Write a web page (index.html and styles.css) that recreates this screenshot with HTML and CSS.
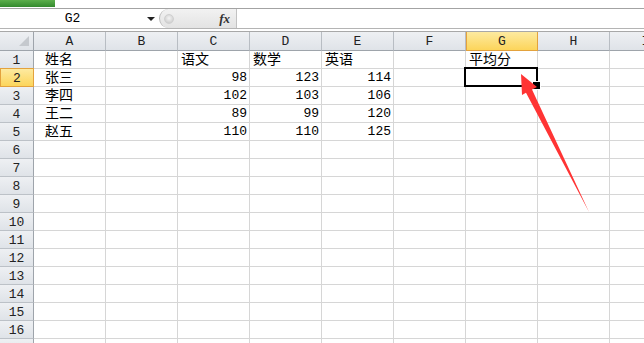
FILE: index.html
```html
<!DOCTYPE html>
<html lang="zh-CN">
<head>
    <meta charset="UTF-8">
    <meta name="viewport" content="width=device-width, initial-scale=1.0">
    <title>Book1 - Excel</title>
    <link rel="stylesheet" href="styles.css">
</head>
<body>
    <div class="ribbon">
        <div class="file-tab"></div>
    </div>

    <div class="formula-bar">
        <div class="name-box">G2</div>
        <div class="name-drop"></div>
        <div class="fx-area">
            <span class="knob"></span>
            <span class="fx">fx</span>
        </div>
        <div class="formula-input"></div>
    </div>
    <div class="bar-gap"></div>

    <div class="sheet">
        <div class="row head">
            <div class="corner"></div>
            <div class="colhead">A</div><div class="colhead">B</div><div class="colhead">C</div>
            <div class="colhead">D</div><div class="colhead">E</div><div class="colhead">F</div>
            <div class="colhead active">G</div><div class="colhead">H</div><div class="colhead">I</div>
        </div>
        <div class="row">
            <div class="rowhead">1</div>
            <div class="cell first">姓名</div><div class="cell"></div><div class="cell">语文</div>
            <div class="cell">数学</div><div class="cell">英语</div><div class="cell"></div>
            <div class="cell">平均分</div><div class="cell"></div><div class="cell"></div>
        </div>
        <div class="row">
            <div class="rowhead active">2</div>
            <div class="cell first">张三</div><div class="cell"></div><div class="cell num">98</div>
            <div class="cell num">123</div><div class="cell num">114</div><div class="cell"></div>
            <div class="cell sel"></div><div class="cell"></div><div class="cell"></div>
        </div>
        <div class="row">
            <div class="rowhead">3</div>
            <div class="cell first">李四</div><div class="cell"></div><div class="cell num">102</div>
            <div class="cell num">103</div><div class="cell num">106</div><div class="cell"></div>
            <div class="cell"></div><div class="cell"></div><div class="cell"></div>
        </div>
        <div class="row">
            <div class="rowhead">4</div>
            <div class="cell first">王二</div><div class="cell"></div><div class="cell num">89</div>
            <div class="cell num">99</div><div class="cell num">120</div><div class="cell"></div>
            <div class="cell"></div><div class="cell"></div><div class="cell"></div>
        </div>
        <div class="row">
            <div class="rowhead">5</div>
            <div class="cell first">赵五</div><div class="cell"></div><div class="cell num">110</div>
            <div class="cell num">110</div><div class="cell num">125</div><div class="cell"></div>
            <div class="cell"></div><div class="cell"></div><div class="cell"></div>
        </div>
        <div class="row"><div class="rowhead">6</div><div class="cell"></div><div class="cell"></div><div class="cell"></div><div class="cell"></div><div class="cell"></div><div class="cell"></div><div class="cell"></div><div class="cell"></div><div class="cell"></div></div>
        <div class="row"><div class="rowhead">7</div><div class="cell"></div><div class="cell"></div><div class="cell"></div><div class="cell"></div><div class="cell"></div><div class="cell"></div><div class="cell"></div><div class="cell"></div><div class="cell"></div></div>
        <div class="row"><div class="rowhead">8</div><div class="cell"></div><div class="cell"></div><div class="cell"></div><div class="cell"></div><div class="cell"></div><div class="cell"></div><div class="cell"></div><div class="cell"></div><div class="cell"></div></div>
        <div class="row"><div class="rowhead">9</div><div class="cell"></div><div class="cell"></div><div class="cell"></div><div class="cell"></div><div class="cell"></div><div class="cell"></div><div class="cell"></div><div class="cell"></div><div class="cell"></div></div>
        <div class="row"><div class="rowhead">10</div><div class="cell"></div><div class="cell"></div><div class="cell"></div><div class="cell"></div><div class="cell"></div><div class="cell"></div><div class="cell"></div><div class="cell"></div><div class="cell"></div></div>
        <div class="row"><div class="rowhead">11</div><div class="cell"></div><div class="cell"></div><div class="cell"></div><div class="cell"></div><div class="cell"></div><div class="cell"></div><div class="cell"></div><div class="cell"></div><div class="cell"></div></div>
        <div class="row"><div class="rowhead">12</div><div class="cell"></div><div class="cell"></div><div class="cell"></div><div class="cell"></div><div class="cell"></div><div class="cell"></div><div class="cell"></div><div class="cell"></div><div class="cell"></div></div>
        <div class="row"><div class="rowhead">13</div><div class="cell"></div><div class="cell"></div><div class="cell"></div><div class="cell"></div><div class="cell"></div><div class="cell"></div><div class="cell"></div><div class="cell"></div><div class="cell"></div></div>
        <div class="row"><div class="rowhead">14</div><div class="cell"></div><div class="cell"></div><div class="cell"></div><div class="cell"></div><div class="cell"></div><div class="cell"></div><div class="cell"></div><div class="cell"></div><div class="cell"></div></div>
        <div class="row"><div class="rowhead">15</div><div class="cell"></div><div class="cell"></div><div class="cell"></div><div class="cell"></div><div class="cell"></div><div class="cell"></div><div class="cell"></div><div class="cell"></div><div class="cell"></div></div>
        <div class="row"><div class="rowhead">16</div><div class="cell"></div><div class="cell"></div><div class="cell"></div><div class="cell"></div><div class="cell"></div><div class="cell"></div><div class="cell"></div><div class="cell"></div><div class="cell"></div></div>
        <div class="row"><div class="rowhead">17</div><div class="cell"></div><div class="cell"></div><div class="cell"></div><div class="cell"></div><div class="cell"></div><div class="cell"></div><div class="cell"></div><div class="cell"></div><div class="cell"></div></div>
    </div>

    <!-- annotation arrow pointing at G2 -->
    <svg class="arrow" width="644" height="343" viewBox="0 0 644 343">
        <polygon points="521,74 522,95 526,92.7 589,212 532,89.5 537,87" fill="#ff3434"/>
    </svg>
</body>
</html>
```

FILE: styles.css
```css
* {
    box-sizing: border-box;
    margin: 0;
    padding: 0;
}

html, body {
    width: 644px;
    height: 343px;
    overflow: hidden;
    background: #fff;
}

body {
    position: relative;
    font-family: "Liberation Mono", "Noto Sans CJK SC", monospace;
    color: #000;
}

.ribbon {
    height: 8px;
    background: #fff;
}

.file-tab {
    width: 55px;
    height: 7px;
    background: linear-gradient(#5cae4c, #338a2e);
}

/* formula bar */
.formula-bar {
    display: flex;
    height: 21px;
    border-top: 1px solid #a3a3a3;
    border-bottom: 1px solid #b4b4b4;
}

.name-box {
    width: 143px;
    font-size: 13px;
    line-height: 19px;
    text-align: center;
    padding-left: 2px;
}

.name-drop {
    width: 16px;
    position: relative;
}

.name-drop::after {
    content: '';
    position: absolute;
    left: 4px;
    top: 8px;
    border-left: 4px solid transparent;
    border-right: 4px solid transparent;
    border-top: 4px solid #222;
}

.fx-area {
    width: 78px;
    display: flex;
    align-items: center;
    justify-content: space-between;
    padding: 0 6px 0 4px;
    background: linear-gradient(#f2f2f2, #e3e3e3);
    border-left: 1px solid #b9b9b9;
    border-right: 1px solid #c2c2c2;
    border-radius: 10px 0 0 10px;
}

.knob {
    width: 10px;
    height: 10px;
    border-radius: 50%;
    background: radial-gradient(circle at 50% 40%, #f4f4f4, #c4c4c4);
    border: 1px solid #d0d0d0;
}

.fx {
    font-family: "Liberation Serif", serif;
    font-style: italic;
    font-weight: bold;
    font-size: 13px;
    color: #333;
}

.formula-input {
    flex: 1;
    background: #fff;
}

.bar-gap {
    height: 3px;
    border-bottom: 1px solid #a8a8a8;
}

/* grid */
.sheet {
    display: flex;
    flex-direction: column;
}

.row {
    display: grid;
    grid-template-columns: 34px repeat(9, 72px);
    height: 18px;
}

.row.head {
    height: 19px;
}

.corner,
.colhead,
.rowhead {
    background: linear-gradient(#eef0f3, #dfe3e8);
    color: #222;
    font-size: 13px;
    display: flex;
    align-items: center;
    justify-content: center;
}

.corner {
    position: relative;
    border-right: 1px solid #9ea4ab;
    border-bottom: 1px solid #9ea4ab;
}

.corner::after {
    content: '';
    position: absolute;
    right: 4px;
    bottom: 4px;
    border-left: 10px solid transparent;
    border-bottom: 10px solid #c5c9ce;
}

.colhead {
    border-right: 1px solid #b8bdc3;
    border-bottom: 1px solid #9ea4ab;
    padding-top: 1px;
}

.rowhead {
    border-right: 1px solid #9ea4ab;
    border-bottom: 1px solid #bcc1c7;
    padding-top: 1px;
}

.colhead.active,
.rowhead.active {
    background: linear-gradient(#fdeaa0, #fcd55b);
    border-color: #e3a23d;
    border-left: 1px solid #e3a23d;
}

.rowhead.active {
    border-top: 1px solid #e3a23d;
    margin-top: -1px;
    height: 19px;
}

.cell {
    border-right: 1px solid #d6d6d6;
    border-bottom: 1px solid #d6d6d6;
    font-size: 14px;
    line-height: 16px;
    display: flex;
    align-items: flex-end;
    padding: 0 3px;
    white-space: nowrap;
}

.cell.first {
    padding-left: 11px;
}

.cell.num {
    justify-content: flex-end;
    font-size: 13px;
    padding-right: 2px;
}

.cell.sel {
    position: relative;
}

.cell.sel::before {
    content: '';
    position: absolute;
    left: -2px;
    top: -2px;
    right: -1px;
    bottom: -1px;
    border: 2px solid #000;
    z-index: 2;
}

.cell.sel::after {
    content: '';
    position: absolute;
    right: -4px;
    bottom: -4px;
    width: 7px;
    height: 7px;
    background: #000;
    border: 1px solid #fff;
    z-index: 3;
}

.arrow {
    position: absolute;
    left: 0;
    top: 0;
    pointer-events: none;
    z-index: 5;
}
```
